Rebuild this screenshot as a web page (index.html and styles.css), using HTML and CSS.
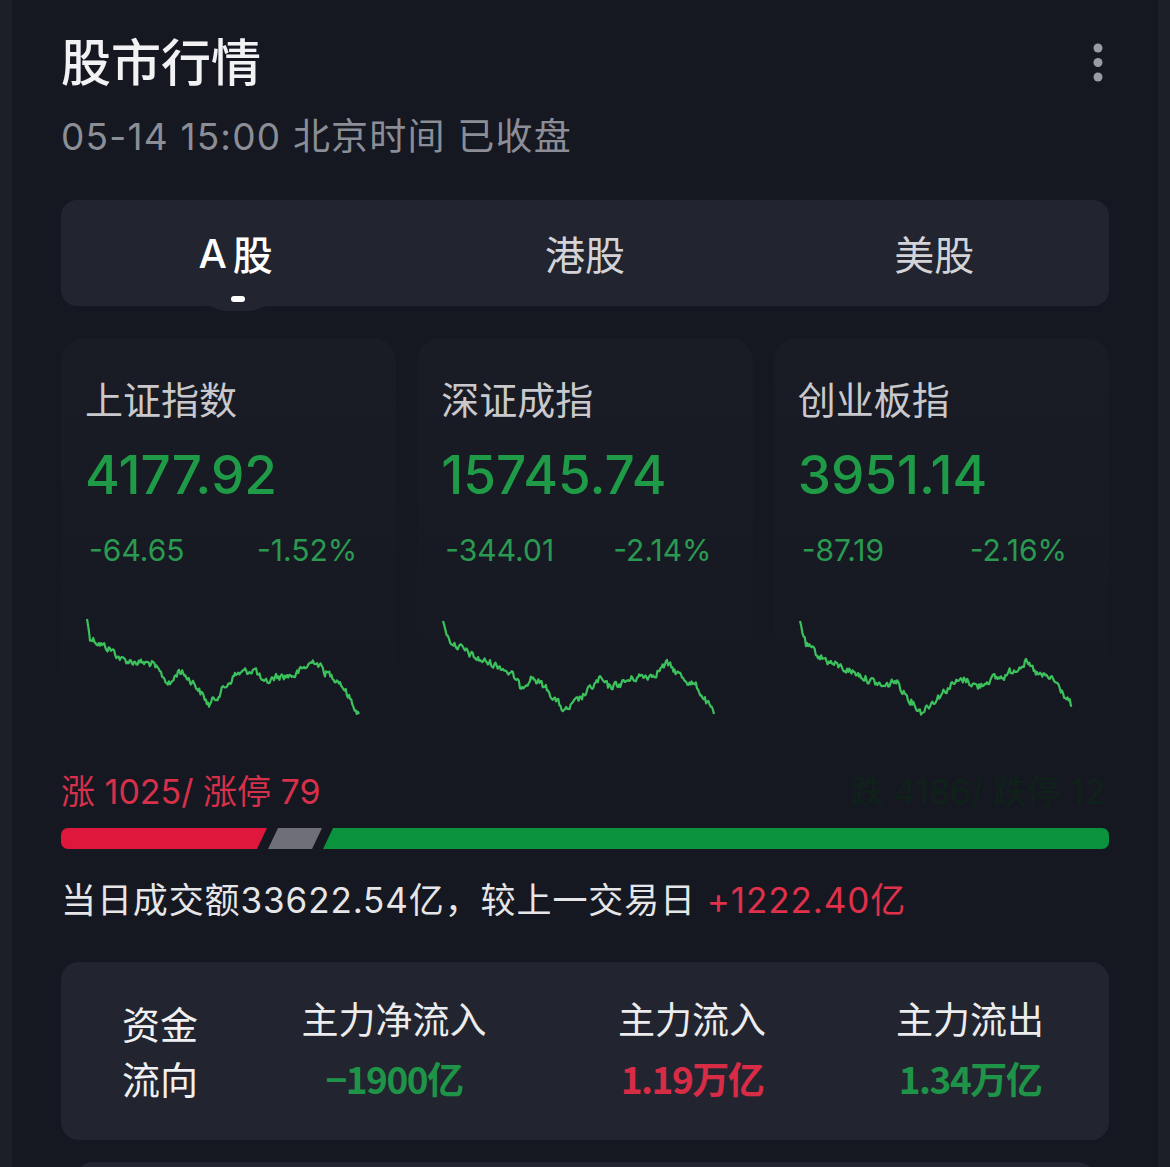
FILE: index.html
```html
<!DOCTYPE html>
<html lang="zh-CN">
<head>
<meta charset="utf-8">
<title>股市行情</title>
<link rel="stylesheet" href="styles.css">
</head>
<body>
<div class="panel">
  <header class="head">
    <div>
      <h1 class="title">股市行情</h1>
      <div class="subtitle">05-14 15:00 北京时间 已收盘</div>
    </div>
    <svg class="more" width="14" height="44" viewBox="0 0 14 44" aria-hidden="true">
      <circle cx="7" cy="7" r="4.5" fill="#9a9ca4"/>
      <circle cx="7" cy="21.5" r="4.5" fill="#9a9ca4"/>
      <circle cx="7" cy="36" r="4.5" fill="#9a9ca4"/>
    </svg>
  </header>

  <nav class="tabs">
    <div class="tab active"><span class="tab-a">A</span>股
      <svg class="notch" width="90" height="10" viewBox="0 0 90 10" aria-hidden="true">
        <path d="M0 0 C18 0 22 8 36 8 L54 8 C68 8 72 0 90 0 Z" fill="#22252f"/>
      </svg>
      <span class="pill"></span>
    </div>
    <div class="tab">港股</div>
    <div class="tab">美股</div>
  </nav>

  <section class="cards">
    <div class="card">
      <div class="c-name">上证指数</div>
      <div class="c-value">4177.92</div>
      <div class="c-change"><span>-64.65</span><span>-1.52%</span></div>
      <svg class="spark" id="spark0" width="290" height="108" viewBox="0 0 290 108"></svg>
    </div>
    <div class="card">
      <div class="c-name">深证成指</div>
      <div class="c-value">15745.74</div>
      <div class="c-change"><span>-344.01</span><span>-2.14%</span></div>
      <svg class="spark" id="spark1" width="290" height="108" viewBox="0 0 290 108"></svg>
    </div>
    <div class="card">
      <div class="c-name">创业板指</div>
      <div class="c-value">3951.14</div>
      <div class="c-change"><span>-87.19</span><span>-2.16%</span></div>
      <svg class="spark" id="spark2" width="290" height="108" viewBox="0 0 290 108"></svg>
    </div>
  </section>

  <div class="counts">
    <span class="up">涨 1025/ 涨停 79</span>
    <span class="down">跌 4186/ 跌停 12</span>
  </div>
  <div class="ratio">
    <div class="seg seg-up"></div>
    <div class="seg seg-flat"></div>
    <div class="seg seg-down"></div>
  </div>

  <div class="turnover">当日成交额33622.54亿，较上一交易日 <span class="red">+1222.40亿</span></div>

  <section class="flow">
    <div class="flow-label">资金<br>流向</div>
    <div class="flow-col">
      <div class="flow-h">主力净流入</div>
      <div class="flow-v green">−1900亿</div>
    </div>
    <div class="flow-col">
      <div class="flow-h">主力流入</div>
      <div class="flow-v red">1.19万亿</div>
    </div>
    <div class="flow-col">
      <div class="flow-h">主力流出</div>
      <div class="flow-v green">1.34万亿</div>
    </div>
  </section>

  <div class="next-card"></div>
</div>
<script src="script.js"></script>
</body>
</html>
```

FILE: styles.css
```css
html, body {
  margin: 0;
  padding: 0;
  background: #1c1f28;
  height: 1167px;
  overflow: hidden;
}
body {
  font-family: "Inter", "Noto Sans CJK SC", sans-serif;
  color: #e8e8ea;
}
.panel {
  margin: 0 12px;
  background: #151821;
  padding: 33px 49px 0 49px;
  height: 1167px;
  box-sizing: border-box;
}
.head {
  display: flex;
  justify-content: space-between;
  align-items: flex-start;
}
.title {
  margin: 0;
  font-size: 50px;
  line-height: 60px;
  font-weight: 500;
  color: #f2f2f4;
}
.subtitle {
  margin-top: 19px;
  font-size: 37px;
  line-height: 50px;
  letter-spacing: 1.2px;
  color: #8b8e96;
}
.more {
  display: block;
  margin-top: 8px;
  margin-right: 4px;
}

.tabs {
  margin-top: 38px;
  height: 106px;
  background: #22252f;
  border-radius: 16px;
  display: grid;
  grid-template-columns: repeat(3, 1fr);
}
.tab {
  position: relative;
  display: flex;
  align-items: center;
  justify-content: center;
  font-size: 40px;
  color: #d4d4d8;
}
.tab.active {
  color: #ffffff;
  font-weight: 500;
}
.tab-a {
  margin-right: 6px;
}
.notch {
  position: absolute;
  left: 50%;
  bottom: -7px;
  margin-left: -43px;
}
.pill {
  position: absolute;
  left: 50%;
  bottom: 4px;
  margin-left: -5px;
  width: 14px;
  height: 6px;
  border-radius: 3px;
  background: #ffffff;
}

.cards {
  margin-top: 32px;
  display: grid;
  grid-template-columns: repeat(3, 1fr);
  gap: 21px;
}
.card {
  border-radius: 24px;
  background: linear-gradient(180deg, #191c25 0%, #171a23 55%, #151821 100%);
  padding: 38px 0 17px 24px;
}
.c-name {
  font-size: 38px;
  line-height: 48px;
  color: #c9c9cd;
}
.c-value {
  margin-top: 21px;
  font-size: 53px;
  line-height: 60px;
  font-weight: 500;
  color: #1f9b47;
}
.c-change {
  margin-top: 25px;
  padding-left: 4px;
  display: grid;
  grid-template-columns: 168px auto;
  font-size: 30px;
  line-height: 40px;
  color: #2a9a51;
}
.spark {
  display: block;
  margin-top: 44px;
}

.counts {
  margin-top: 33px;
  display: flex;
  justify-content: space-between;
  font-size: 34px;
  line-height: 40px;
}
.counts .up { color: #d6304a; }
.counts .down { color: #0f2219; padding-right: 4px; }

.ratio {
  margin-top: 16px;
  display: flex;
  gap: 1px;
  height: 21px;
}
.seg { height: 100%; }
.seg-up {
  width: 206px;
  background: #e0173d;
  border-radius: 7px 0 0 7px;
  clip-path: polygon(0 0, 100% 0, calc(100% - 10px) 100%, 0 100%);
}
.seg-flat {
  width: 54px;
  background: #6f7077;
  clip-path: polygon(10px 0, 100% 0, calc(100% - 10px) 100%, 0 100%);
}
.seg-down {
  flex: 1;
  background: #0a933c;
  border-radius: 0 7px 7px 0;
  clip-path: polygon(10px 0, 100% 0, 100% 100%, 0 100%);
}

.turnover {
  margin-top: 29px;
  font-size: 35px;
  line-height: 44px;
  letter-spacing: 0.9px;
  color: #e6e6e8;
}
.red { color: #e0304a; }
.green { color: #1f9b47; }

.flow {
  margin-top: 40px;
  height: 178px;
  box-sizing: border-box;
  background: #22252f;
  border-radius: 18px;
  padding-top: 31px;
  display: grid;
  grid-template-columns: 210px 246px 350px 206px;
  align-items: start;
  font-family: "Noto Sans CJK SC", sans-serif;
}
.flow-label {
  padding-left: 61px;
  padding-top: 2px;
  font-size: 38px;
  line-height: 55px;
  color: #f0f0f2;
}
.flow-col {
  text-align: center;
}
.flow-h {
  font-size: 37px;
  line-height: 50px;
  color: #ececee;
}
.flow-v {
  margin-top: 10px;
  font-size: 37px;
  line-height: 50px;
  font-weight: 700;
  letter-spacing: -1.5px;
}
.flow-v.green { color: #1f9347; }
.flow-v.red { color: #d82c46; }
.next-card {
  margin: 22px 14px 0 14px;
  height: 40px;
  background: #22252f;
  border-radius: 18px 18px 0 0;
}
```

FILE: script.js
```js
(function () {
  var seed = 12345;
  function rnd() {
    seed = (seed * 1103515245 + 12345) % 2147483648;
    return seed / 2147483648;
  }
  var sets = [
    { x0: 85, pts: [[85,622],[88,640],[100,648],[110,653],[120,663],[150,667],[168,688],[177,673],[193,687],[207,708],[223,690],[233,678],[253,672],[262,688],[273,680],[293,678],[313,663],[323,675],[337,683],[357,717]] },
    { x0: 441, pts: [[441,624],[447,643],[460,652],[475,662],[500,670],[512,680],[518,690],[530,680],[545,692],[563,715],[580,700],[598,682],[606,690],[615,688],[635,680],[650,678],[665,667],[680,680],[695,690],[712,717]] },
    { x0: 797, pts: [[797,624],[803,648],[815,658],[830,667],[855,677],[870,685],[882,690],[892,683],[905,700],[918,715],[935,700],[948,688],[962,682],[975,690],[985,683],[1000,680],[1022,665],[1035,678],[1050,682],[1069,709]] }
  ];
  var y0 = 617;
  sets.forEach(function (s, idx) {
    var svg = document.getElementById('spark' + idx);
    if (!svg) return;
    var out = [];
    var p = s.pts;
    var walk = 0;
    for (var i = 0; i < p.length - 1; i++) {
      var a = p[i], b = p[i + 1];
      var n = Math.max(2, Math.round((b[0] - a[0]) / 1.1));
      for (var k = 0; k < n; k++) {
        var t = k / n;
        var x = a[0] + (b[0] - a[0]) * t;
        var y = a[1] + (b[1] - a[1]) * t;
        walk = walk * 0.45 + (rnd() - 0.5) * 7;
        var jy = (i === 0 && k < 2) ? 0 : walk;
        out.push((x - s.x0 + 2).toFixed(1) + ',' + (y - y0 + jy).toFixed(1));
      }
    }
    var last = p[p.length - 1];
    out.push((last[0] - s.x0 + 2).toFixed(1) + ',' + (last[1] - y0).toFixed(1));
    var pl = document.createElementNS('http://www.w3.org/2000/svg', 'polyline');
    pl.setAttribute('points', out.join(' '));
    pl.setAttribute('fill', 'none');
    pl.setAttribute('stroke', '#3cc15d');
    pl.setAttribute('stroke-width', '2.2');
    pl.setAttribute('stroke-linejoin', 'round');
    svg.appendChild(pl);
  });
})();
```
